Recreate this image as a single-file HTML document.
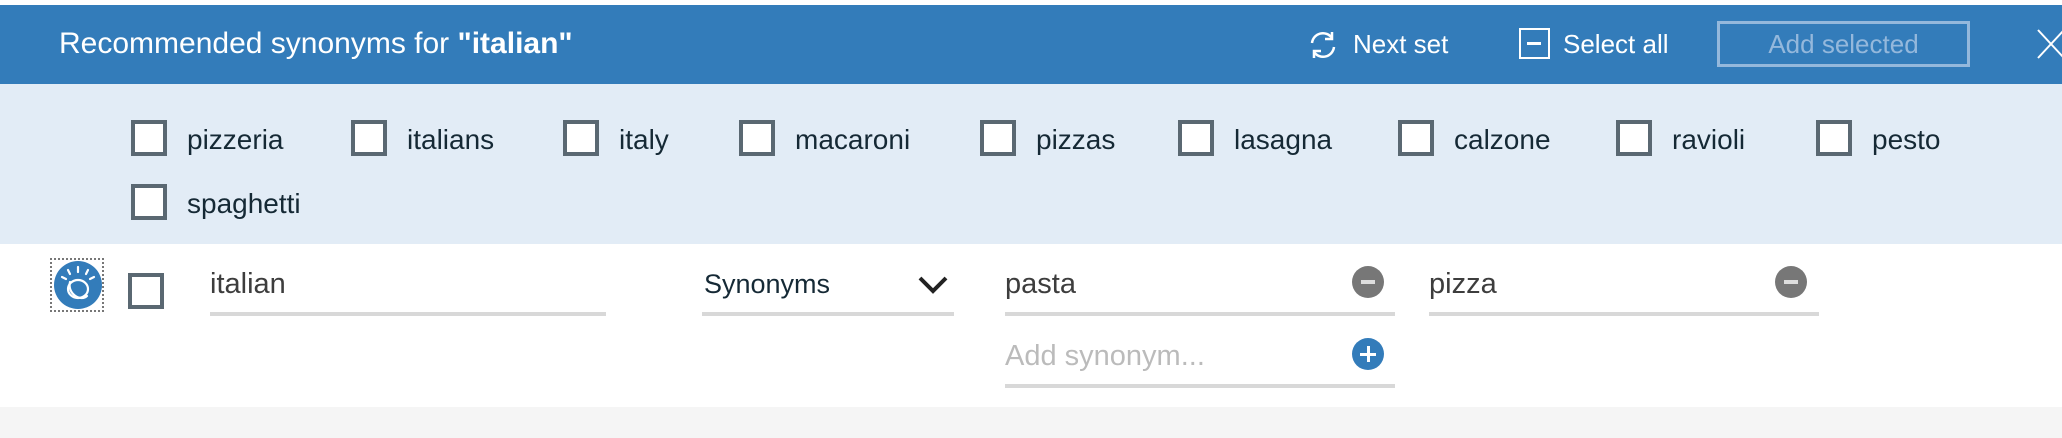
<!DOCTYPE html>
<html><head><meta charset="utf-8"><style>
*{margin:0;padding:0;box-sizing:border-box}
body{width:2062px;height:438px;position:relative;overflow:hidden;background:#fff;font-family:"Liberation Sans",sans-serif}
.abs{position:absolute}
.hdr{left:0;top:5px;width:2062px;height:79px;background:#337cba}
.blue{left:0;top:84px;width:2062px;height:160px;background:#e2ecf6}
.grey{left:0;top:407px;width:2062px;height:31px;background:#f5f5f5}
.cb{position:absolute;width:36px;height:36px;border:4px solid #5a6872;background:#fff}
.lbl{position:absolute;font-size:28px;color:#152935;line-height:36px;white-space:nowrap}
.ul{position:absolute;height:4px;background:#d8d8d8}
.t{position:absolute;font-size:29px;color:#3d3d3d;white-space:nowrap;line-height:32px}
.circ{position:absolute;width:32px;height:32px;border-radius:50%}
</style></head><body>
<div class="abs hdr"></div>
<div class="abs blue"></div>
<div class="abs grey"></div>
<div class="abs" style="left:59px;top:26px;font-size:30px;color:#fff;line-height:36px;white-space:nowrap">Recommended synonyms for <b>"italian"</b></div>
<svg class="abs" style="left:1307px;top:29px" width="32" height="32" viewBox="0 0 32 32" fill="none" stroke="#fff" stroke-width="2.5"><path d="M5 14 A11 11 0 0 1 25 9"/><path d="M27 18 A11 11 0 0 1 7 23"/><path d="M25 3 V10 H18" /><path d="M7 29 V22 H14"/></svg>
<div class="abs" style="left:1353px;top:27px;font-size:26px;color:#fff;line-height:34px">Next set</div>
<div class="abs" style="left:1519px;top:28px;width:31px;height:31px;border:2.5px solid #fff"><div style="position:absolute;left:6px;top:12px;width:14px;height:3px;background:#fff"></div></div>
<div class="abs" style="left:1563px;top:27px;font-size:26px;color:#fff;line-height:34px">Select all</div>
<div class="abs" style="left:1717px;top:21px;width:253px;height:46px;border:3px solid #94b8dc;color:#94b8dc;font-size:26px;text-align:center;line-height:40px">Add selected</div>
<svg class="abs" style="left:2036px;top:28px" width="30" height="32"><path d="M2 2 L28 30 M28 2 L2 30" stroke="#fff" stroke-width="2"/></svg>

<div class="cb" style="left:131px;top:120px"></div><div class="lbl" style="left:187px;top:122px">pizzeria</div>
<div class="cb" style="left:351px;top:120px"></div><div class="lbl" style="left:407px;top:122px">italians</div>
<div class="cb" style="left:563px;top:120px"></div><div class="lbl" style="left:619px;top:122px">italy</div>
<div class="cb" style="left:739px;top:120px"></div><div class="lbl" style="left:795px;top:122px">macaroni</div>
<div class="cb" style="left:980px;top:120px"></div><div class="lbl" style="left:1036px;top:122px">pizzas</div>
<div class="cb" style="left:1178px;top:120px"></div><div class="lbl" style="left:1234px;top:122px">lasagna</div>
<div class="cb" style="left:1398px;top:120px"></div><div class="lbl" style="left:1454px;top:122px">calzone</div>
<div class="cb" style="left:1616px;top:120px"></div><div class="lbl" style="left:1672px;top:122px">ravioli</div>
<div class="cb" style="left:1816px;top:120px"></div><div class="lbl" style="left:1872px;top:122px">pesto</div>
<div class="cb" style="left:131px;top:184px"></div><div class="lbl" style="left:187px;top:186px">spaghetti</div>

<div class="abs" style="left:50px;top:258px;width:54px;height:54px;border:2px dotted #777"></div>
<svg class="abs" style="left:53px;top:260px" width="50" height="50" viewBox="0 0 50 50"><circle cx="25" cy="25" r="24" fill="#337cba"/><g stroke="#fff" stroke-width="2.2" fill="none" stroke-linecap="round"><path d="M25 7v5M15 10l2 4M35 10l-2 4M9 17l4 2M41 17l-4 2"/><ellipse cx="25" cy="29" rx="10" ry="9"/><path d="M17 22 C 14 34, 28 42, 34 36"/></g></svg>
<div class="cb" style="left:128px;top:273px"></div>

<div class="t" style="left:210px;top:268px">italian</div>
<div class="ul" style="left:210px;top:312px;width:396px"></div>
<div class="t" style="left:704px;top:268px;font-size:27px;color:#152935">Synonyms</div>
<svg class="abs" style="left:917px;top:274px" width="32" height="22"><path d="M3 4 L16 17 L29 4" stroke="#222" stroke-width="4" fill="none"/></svg>
<div class="ul" style="left:702px;top:312px;width:252px"></div>

<div class="t" style="left:1005px;top:268px">pasta</div>
<div class="circ" style="left:1352px;top:266px;background:#777"><div style="position:absolute;left:9px;top:14px;width:14px;height:4px;background:#ddd"></div></div>
<div class="ul" style="left:1005px;top:312px;width:390px"></div>
<div class="t" style="left:1429px;top:268px">pizza</div>
<div class="circ" style="left:1775px;top:266px;background:#777"><div style="position:absolute;left:9px;top:14px;width:14px;height:4px;background:#ddd"></div></div>
<div class="ul" style="left:1429px;top:312px;width:390px"></div>

<div class="t" style="left:1005px;top:340px;color:#bbb">Add synonym...</div>
<div class="circ" style="left:1352px;top:338px;background:#337cba"><div style="position:absolute;left:8px;top:15px;width:16px;height:2.5px;background:#fff"></div><div style="position:absolute;left:15px;top:8px;width:2.5px;height:16px;background:#fff"></div></div>
<div class="ul" style="left:1005px;top:384px;width:390px"></div>
</body></html>
